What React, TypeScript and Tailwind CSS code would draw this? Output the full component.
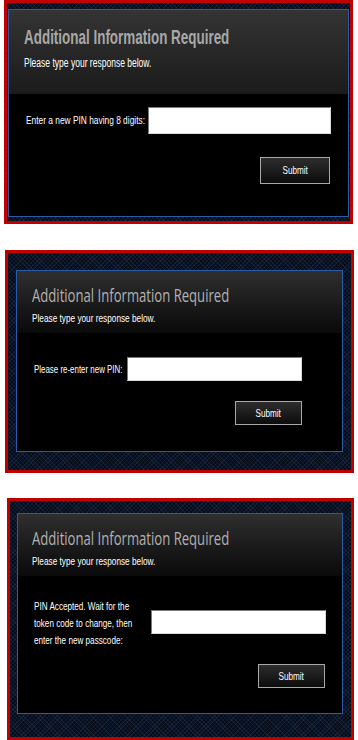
import { ReactNode } from 'react';

// the source shot is squeezed sideways, so the text is narrowed with scale-x
function Narrow({ className, children }: { className: string; children: ReactNode }) {
  return <span className={`${className} inline-block origin-left whitespace-nowrap`}>{children}</span>;
}

function SubmitButton({ className }: { className: string }) {
  return (
    <button
      type="button"
      className={`${className} flex items-center justify-center border border-[#a9a9a9] bg-gradient-to-b from-[#2e2e2e] to-[#0c0c0c] font-['Liberation_Sans',sans-serif] text-[11px] text-white`}
    >
      <span className="inline-block scale-x-[0.74]">Submit</span>
    </button>
  );
}

function PinInput({ className }: { className: string }) {
  return (
    <input
      type="text"
      className={`${className} shrink-0 border border-t-[#7a7a7a] border-r-[#d8d8d8] border-b-[#d8d8d8] border-l-[#7a7a7a] bg-white outline-none`}
    />
  );
}

function Panel({ outer, children }: { outer: string; children: ReactNode }) {
  return (
    <div
      className={`${outer} border-[3px] border-[#c00000] bg-[#060c18] bg-[repeating-linear-gradient(45deg,rgba(50,75,120,0.24)_0px,rgba(50,75,120,0.24)_1px,transparent_1px,transparent_3px),repeating-linear-gradient(-45deg,rgba(50,75,120,0.24)_0px,rgba(50,75,120,0.24)_1px,transparent_1px,transparent_3px)]`}
    >
      <div className="h-full border border-[#2b5aa6] bg-black font-['Liberation_Sans',sans-serif]">{children}</div>
    </div>
  );
}

export default function App() {
  return (
    <div className="min-h-[740px] w-[358px] overflow-hidden bg-white">
      {/* step 1: new PIN */}
      <Panel outer="ml-[4px] h-[224px] w-[349px] pt-[6px] pr-[1px] pb-[4px] pl-[1px]">
        <div className="h-[84px] bg-gradient-to-b from-[#343434] to-[#1b1b1b] pt-[15px] pl-[15px]">
          <h1 className="text-[21px] leading-[24px] font-bold text-[#a8a8a8]">
            <Narrow className="scale-x-[0.64]">Additional Information Required</Narrow>
          </h1>
          <p className="mt-[7px] text-[12px] leading-[14px] text-white">
            <Narrow className="scale-x-[0.71]">Please type your response below.</Narrow>
          </p>
        </div>
        <div className="mt-[13px] flex items-center pr-[17px] pl-[17px]">
          <span className="min-w-0 grow basis-0 text-[11px] text-white">
            <Narrow className="scale-x-[0.76]">Enter a new PIN having 8 digits:</Narrow>
          </span>
          <PinInput className="h-[27px] w-[183px]" />
        </div>
        <div className="mt-[23px] flex justify-end pr-[18px]">
          <SubmitButton className="h-[27px] w-[70px]" />
        </div>
      </Panel>

      {/* step 2: confirm PIN */}
      <Panel outer="mt-[26px] ml-[5px] h-[223px] w-[349px] pt-[17px] pr-[8px] pb-[18px] pl-[8px]">
        <div className="h-[62px] bg-gradient-to-b from-[#2f2f2f] to-[#0a0a0a] pt-[12px] pl-[15px]">
          <h1 className="font-['Open_Sans',sans-serif] text-[19px] leading-[24px] text-[#b2b2b2]">
            <Narrow className="scale-x-[0.69]">Additional Information Required</Narrow>
          </h1>
          <p className="mt-[5px] text-[11px] leading-[13px] text-white">
            <Narrow className="scale-x-[0.75]">Please type your response below.</Narrow>
          </p>
        </div>
        <div className="mt-[24px] flex items-center pr-[40px] pl-[17px]">
          <span className="min-w-0 grow basis-0 text-[11px] text-white">
            <Narrow className="scale-x-[0.72]">Please re-enter new PIN:</Narrow>
          </span>
          <PinInput className="h-[24px] w-[175px]" />
        </div>
        <div className="mt-[20px] flex justify-end pr-[40px]">
          <SubmitButton className="h-[24px] w-[67px]" />
        </div>
      </Panel>

      {/* step 3: new passcode */}
      <Panel outer="mt-[25px] ml-[7px] h-[242px] w-[347px] pt-[12px] pr-[8px] pb-[23px] pl-[7px]">
        <div className="h-[62px] bg-gradient-to-b from-[#2f2f2f] to-[#0a0a0a] pt-[12px] pl-[14px]">
          <h1 className="font-['Open_Sans',sans-serif] text-[19px] leading-[24px] text-[#b2b2b2]">
            <Narrow className="scale-x-[0.69]">Additional Information Required</Narrow>
          </h1>
          <p className="mt-[5px] text-[11px] leading-[13px] text-white">
            <Narrow className="scale-x-[0.75]">Please type your response below.</Narrow>
          </p>
        </div>
        <div className="mt-[22px] flex items-center pr-[16px] pl-[16px]">
          <div className="w-[100px] shrink-0">
            <p className="w-[136px] origin-left scale-x-[0.74] text-[11px] leading-[17px] text-white">
              PIN Accepted. Wait for the token code to change, then enter the new passcode:
            </p>
          </div>
          <div className="grow" />
          <PinInput className="mb-[4px] h-[24px] w-[175px]" />
        </div>
        <div className="mt-[15px] flex justify-end pr-[17px]">
          <SubmitButton className="h-[24px] w-[67px]" />
        </div>
      </Panel>
    </div>
  );
}
